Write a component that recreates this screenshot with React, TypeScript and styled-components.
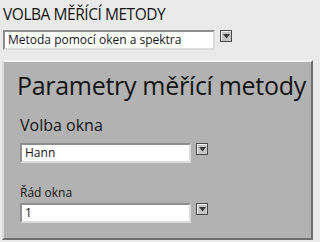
import React from 'react';
import styled, {createGlobalStyle} from 'styled-components';

const GlobalStyle = createGlobalStyle`
  html, body {
    margin: 0;
    padding: 0;
    background: #eaeaea;
  }
  body {
    font-family: "Open Sans", "Noto Sans", sans-serif;
    color: #141414;
  }
`

type SelectPropsType = {
    value: string
    width: number
}

const Select = (props: SelectPropsType) => {
    return (
        <SelectRow>
            <Field $width={props.width}>{props.value}</Field>
            <DropButton>
                <svg width="7" height="5" viewBox="0 0 7 5">
                    <path d="M0 0H7L3.5 4.5Z" fill="#3a3a3a"/>
                </svg>
            </DropButton>
        </SelectRow>
    );
};

export default function App() {
    return (
        <Page>
            <GlobalStyle/>
            <Heading>VOLBA MĚŘÍCÍ METODY</Heading>
            <Select value="Metoda pomocí oken a spektra" width={212}/>
            <Panel>
                <PanelTitle>Parametry měřící metody</PanelTitle>
                <Label $size={16} $after={8}>Volba okna</Label>
                <Select value="Hann" width={171}/>
                <Label $size={12} $gap={22} $after={2}>Řád okna</Label>
                <Select value="1" width={171}/>
            </Panel>
        </Page>
    );
}

const Page = styled.div`
  width: 317px;
  height: 242px;
  padding: 4px 0 0 3px;
  box-sizing: border-box;
  overflow: hidden;
`
const Heading = styled.div`
  font-size: 15.5px;
  line-height: 20px;
  letter-spacing: -0.45px;
  margin-bottom: 6px;
`
const SelectRow = styled.div`
  display: flex;
  align-items: flex-start;
  gap: 5px;
`
const Field = styled.div<{$width: number}>`
  width: ${p => p.$width}px;
  height: 20px;
  box-sizing: border-box;
  background: #fff;
  border-top: 2px solid #8e8e8e;
  border-left: 2px solid #8e8e8e;
  border-right: 2px solid #dcdcdc;
  border-bottom: 2px solid #dcdcdc;
  font-size: 12px;
  line-height: 16px;
  padding-left: 3px;
  white-space: nowrap;
  overflow: hidden;
`
const DropButton = styled.div`
  width: 12px;
  height: 12px;
  box-sizing: border-box;
  display: flex;
  align-items: center;
  justify-content: center;
  background: #c6c6c6;
  border: 1px solid #4a4a4a;
  box-shadow: inset 1px 1px 0 #f0f0f0;
`
const Panel = styled.div`
  margin: 10px 0 0 -1px;
  width: 311px;
  height: 180px;
  box-sizing: border-box;
  background: #b2b2b2;
  border-top: 2px solid #f4f4f4;
  border-left: 2px solid #d8d8d8;
  border-right: 2px solid #6e6e6e;
  border-bottom: 2px solid #6e6e6e;
  padding: 7px 0 0 16px;
`
const PanelTitle = styled.div`
  font-size: 25px;
  line-height: 32px;
  letter-spacing: -0.3px;
  margin-left: -3px;
  margin-bottom: 14px;
`
const Label = styled.div<{$size: number, $gap?: number, $after: number}>`
  font-size: ${p => p.$size}px;
  line-height: ${p => p.$size + 4}px;
  margin-top: ${p => p.$gap ?? 0}px;
  margin-bottom: ${p => p.$after}px;
`
